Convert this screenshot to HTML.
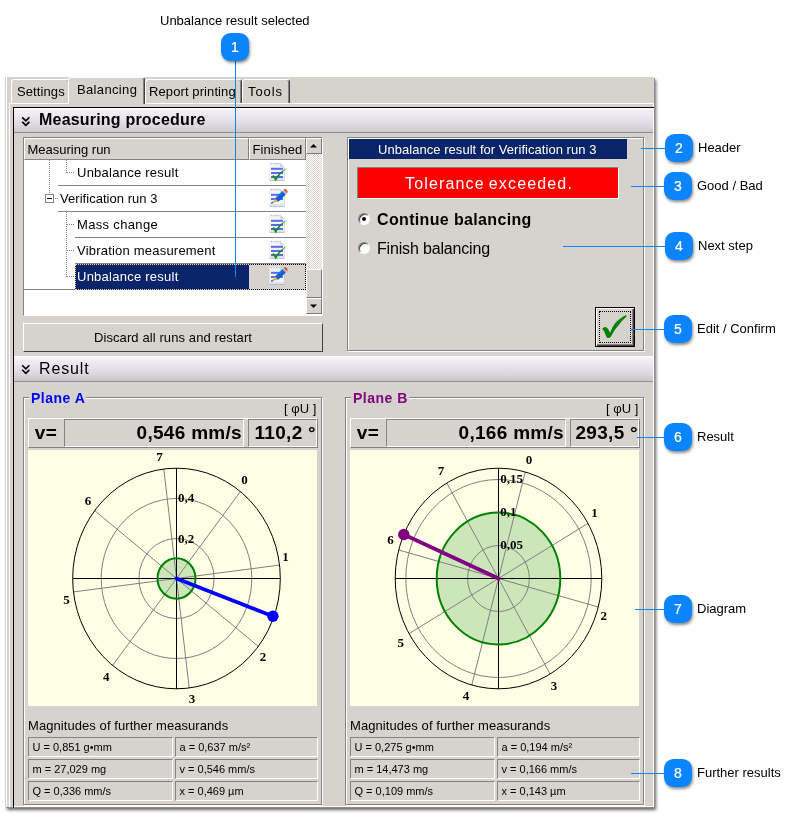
<!DOCTYPE html>
<html><head><meta charset="utf-8"><title>Unbalance result</title>
<style>
html,body{margin:0;padding:0;background:#fff;}
body{width:797px;height:817px;position:relative;overflow:hidden;font-family:"Liberation Sans",Arial,sans-serif;font-size:13px;color:#000;}
div,svg{position:absolute;box-sizing:border-box;}
.win{left:5px;top:77px;width:649px;height:730px;background:#d6d3ce;box-shadow:1px 1px 0 #8c8c8c,2px 3px 3px rgba(0,0,0,.6);}
.tab{top:79px;height:24px;border:1px solid #fff;border-right:1px solid #424142;border-bottom:none;border-radius:3px 3px 0 0;background:#d6d3ce;line-height:23.5px;padding-left:5px;white-space:nowrap;box-shadow:inset -1px 0 0 #848284;}
.tab.sel{top:77px;height:27px;line-height:23px;z-index:2;}
.hdr{left:14px;width:639px;height:25px;background:linear-gradient(#fff 0%,#f4eff6 10%,#e9e4ec 40%,#dbd7df 72%,#c9c6cd 100%);font-size:16px;line-height:24px;white-space:nowrap;}
.hdr span{position:absolute;left:25px;top:0;}
.chev{left:7px;top:8px;}
.sunk{border:1px solid;border-color:#848284 #fff #fff #848284;}
.grp{border:1px solid #848284;box-shadow:1px 1px 0 #fff, inset 1px 1px 0 #fff;}
.btn{border:1px solid;border-color:#fff #424142 #424142 #fff;background:#d6d3ce;text-align:center;}
.hd{border-color:#fff #848284 #848284 #fff;}
.sb{border-color:#fff #7b797b #7b797b #fff;}
.ico{overflow:visible;}
.row{left:25px;width:281px;height:26px;line-height:25px;white-space:nowrap;letter-spacing:.12px;}
.rl{height:1px;background:#848284;}
.dot{border:0;}
.badge{width:28px;height:28px;border-radius:9.5px;background:#0a84ff;color:#fff;font-weight:normal;font-size:14px;line-height:28px;text-align:center;box-shadow:1px 2px 3px rgba(0,0,0,.45);}
.badge span{display:inline-block;-webkit-text-stroke:.2px #fff;}
.cl{background:#0a84ff;}
.lab{font-size:13px;line-height:15px;white-space:nowrap;}
.dia{background:#ffffe6;}
.dl{font-family:"Liberation Serif","Times New Roman",serif;font-weight:bold;font-size:13px;fill:#000;}
.val{letter-spacing:.3px;font-weight:bold;font-size:19px;line-height:25px;white-space:nowrap;border:1px solid;border-color:#848284 #fff #fff #848284;}
.vp{border:1px solid;border-color:#fff #848284 #848284 #fff;}
.vl{letter-spacing:.3px;font-weight:bold;font-size:19px;line-height:26px;white-space:nowrap;}
.fb{border:1px solid;border-color:#848284 #fff #fff #848284;font-size:11px;line-height:17px;padding-left:3.5px;white-space:nowrap;padding-top:1px;}
#root{left:0;top:0;width:797px;height:817px;will-change:transform;}
</style></head><body><div id="root">

<!-- top annotation -->
<div class="lab" style="left:160px;top:13px">Unbalance result selected</div>
<div class="win"></div>
<!-- window edge highlights -->
<div style="left:6px;top:77px;width:1px;height:730px;background:#fff"></div>
<div style="left:653px;top:104px;width:1px;height:703px;background:#fff"></div>
<div style="left:9px;top:103px;width:1px;height:704px;background:#fff"></div>
<div style="left:9px;top:103px;width:645px;height:1px;background:#fff"></div>
<div style="left:13px;top:806px;width:641px;height:1px;background:#fff"></div>

<!-- tabs -->
<div class="tab" style="left:11px;width:59px;letter-spacing:.1px">Settings</div>
<div class="tab sel" style="left:68px;width:77px;padding-left:8px;letter-spacing:.35px">Balancing</div>
<div class="tab" style="left:145px;width:97px;padding-left:3px;letter-spacing:.1px">Report printing</div>
<div class="tab" style="left:242px;width:48px;padding-left:5px;letter-spacing:.9px">Tools</div>

<!-- panel black border -->
<div style="left:13px;top:107px;width:641px;height:1px;background:#000"></div>
<div style="left:13px;top:107px;width:1px;height:701px;background:#000"></div>

<!-- header 1 -->
<div class="hdr" style="top:108px;font-weight:bold"><svg class="chev" width="10" height="11" viewBox="0 0 10 11"><path d="M1.2 1.3l3.6 3.6 3.6-3.6M1.2 5.8l3.6 3.6 3.6-3.6" fill="none" stroke="#000" stroke-width="1.7"/></svg><span style="letter-spacing:.2px">Measuring procedure</span></div>
<div style="left:14px;top:132px;width:639px;height:1px;background:#8e8c92"></div>

<!-- list -->
<div style="left:23px;top:137px;width:300px;height:179px;background:#fff;border:1px solid;border-color:#848284 #fff #fff #848284"></div>
<div class="btn hd" style="left:24px;top:138px;width:225px;height:22px;line-height:22px;text-align:left;padding-left:2.5px">Measuring run</div>
<div class="btn hd" style="left:249px;top:138px;width:57px;height:22px;line-height:22px;text-align:left;padding-left:2.5px;letter-spacing:.1px">Finished</div>
<!-- scrollbar -->
<div style="left:306px;top:138px;width:16px;height:176px;background:#eae8e4;background-image:repeating-conic-gradient(#fff 0 25%,#d6d3ce 0 50%);background-size:2px 2px"></div>
<div class="btn sb" style="left:306px;top:138px;width:16px;height:16px"><svg style="left:3px;top:4px" width="8" height="5"><path d="M0 4.5L3.5 1 7 4.5z" fill="#000"/></svg></div>
<div class="btn sb" style="left:306px;top:269px;width:16px;height:29px"></div>
<div class="btn sb" style="left:306px;top:298px;width:16px;height:16px"><svg style="left:3px;top:5px" width="8" height="5"><path d="M0 0.5L3.5 4 7 0.5z" fill="#000"/></svg></div>

<!-- rows -->
<div class="row" style="top:160px"><span style="position:absolute;left:52px;letter-spacing:.25px">Unbalance result</span></div>
<div class="rl" style="left:58px;top:185px;width:248px"></div>
<div class="row" style="top:186px"><span style="position:absolute;left:35px;letter-spacing:.04px">Verification run 3</span></div>
<div class="rl" style="left:58px;top:211px;width:248px"></div>
<div class="row" style="top:212px"><span style="position:absolute;left:52px;letter-spacing:.34px">Mass change</span></div>
<div class="rl" style="left:75px;top:237px;width:231px"></div>
<div class="row" style="top:238px"><span style="position:absolute;left:52px;letter-spacing:.21px">Vibration measurement</span></div>
<div class="rl" style="left:75px;top:263px;width:231px"></div>
<div style="left:75px;top:264px;width:174px;height:26px;background:#0a246a;color:#fff;line-height:24px;padding-left:1px;letter-spacing:.25px;border:1px dotted #e8d890;border-right:none;white-space:nowrap">Unbalance result</div>
<div style="left:249px;top:264px;width:57px;height:26px;background:#d6d3ce;border:1px dotted #000;border-left:none"></div>
<div class="rl" style="left:24px;top:289px;width:51px;"></div>
<!-- tree lines -->
<div style="left:49px;top:160px;width:0;height:35px;border-left:1px dotted #848284"></div>
<div style="left:66px;top:160px;width:0;height:13px;border-left:1px dotted #848284"></div>
<div style="left:66px;top:172px;width:8px;height:0;border-top:1px dotted #848284"></div>
<div style="left:45px;top:194px;width:9px;height:9px;border:1px solid #848284;background:#fff"></div>
<div style="left:47px;top:198px;width:5px;height:1px;background:#000"></div>
<div style="left:55px;top:198px;width:3px;height:0;border-top:1px dotted #848284"></div>
<div style="left:66px;top:212px;width:0;height:65px;border-left:1px dotted #848284"></div>
<div style="left:66px;top:224px;width:8px;height:0;border-top:1px dotted #848284"></div>
<div style="left:66px;top:250px;width:8px;height:0;border-top:1px dotted #848284"></div>
<div style="left:66px;top:276px;width:8px;height:0;border-top:1px dotted #848284"></div>
<svg class="ico" style="left:270px;top:162px" width="18" height="20" viewBox="0 0 18 20"><path d="M-0.2 1.4h10.4l4.4 4.2v13.4h-14.8z" fill="#a9a9b0" opacity=".75"/>
<path d="M-0.5 0.6h10.6l4.1 4.1v13.4h-14.7z" fill="#f3f4fc"/>
<path d="M10.1 0.6l4.1 4.1h-4.1z" fill="#cfd1dc"/>
<path d="M-0.5 15.9h14.7v2.2h-14.7z" fill="#dbe4fb"/>
<path d="M0.8 1.6h1.2M3.2 1.6h1.4M5.8 1.6h1.4M8.2 1.6h1.2" stroke="#b4b6c4" stroke-width="1.2"/>
<rect x="1" y="5.8" width="12" height="2" fill="#596ee2"/><rect x="1" y="10" width="12" height="2" fill="#596ee2"/><rect x="1" y="14" width="12" height="2" fill="#596ee2"/>
<path d="M2 14.3 L3.7 13 C4.5 13.9 5.1 14.9 5.7 16.1 C8.2 11.8 12 8 17 5.9 C12.2 9.6 8.4 14.2 5.7 19.6 C4.8 17.4 3.5 15.6 2 14.3z" fill="#1f8a1c"/>
</svg>
<svg class="ico" style="left:270px;top:188px" width="18" height="20" viewBox="0 0 18 20"><defs><linearGradient id="pg188" x1="0" y1="0" x2="1" y2="1"><stop offset="0" stop-color="#3aa0f4"/><stop offset=".5" stop-color="#0c62d8"/><stop offset="1" stop-color="#0a3ea8"/></linearGradient></defs><path d="M-0.2 1.4h10.4l4.4 4.2v13.4h-14.8z" fill="#a9a9b0" opacity=".75"/>
<path d="M-0.5 0.6h10.6l4.1 4.1v13.4h-14.7z" fill="#f3f4fc"/>
<path d="M10.1 0.6l4.1 4.1h-4.1z" fill="#cfd1dc"/>
<path d="M-0.5 15.9h14.7v2.2h-14.7z" fill="#dbe4fb"/>
<path d="M0.8 1.6h1.2M3.2 1.6h1.4M5.8 1.6h1.4M8.2 1.6h1.2" stroke="#b4b6c4" stroke-width="1.2"/>
<rect x="1" y="5.8" width="12" height="2" fill="#596ee2"/><rect x="1" y="10" width="12" height="2" fill="#596ee2"/><rect x="1" y="14.1" width="1.8" height="1.6" fill="#596ee2"/>
<path d="M4.8 10.6 L12.4 3 L15.8 6.4 L8.2 13.8z" fill="url(#pg188)"/>
<path d="M12.4 3 L13.6 1.8 L17 5.2 L15.8 6.4z" fill="#b8bcc4"/>
<path d="M13.6 1.8 L14.4 1 C15.6 0.4 18 2.6 17.6 4 L17 5.2z" fill="#e0552c"/>
<path d="M4.8 10.6 L8.2 13.8 L3.8 14.6z" fill="#f2a23a"/>
<path d="M3.8 14.6 L2 14.8 L3.2 12.9z" fill="#6a4a30"/>
</svg>
<svg class="ico" style="left:270px;top:214px" width="18" height="20" viewBox="0 0 18 20"><path d="M-0.2 1.4h10.4l4.4 4.2v13.4h-14.8z" fill="#a9a9b0" opacity=".75"/>
<path d="M-0.5 0.6h10.6l4.1 4.1v13.4h-14.7z" fill="#f3f4fc"/>
<path d="M10.1 0.6l4.1 4.1h-4.1z" fill="#cfd1dc"/>
<path d="M-0.5 15.9h14.7v2.2h-14.7z" fill="#dbe4fb"/>
<path d="M0.8 1.6h1.2M3.2 1.6h1.4M5.8 1.6h1.4M8.2 1.6h1.2" stroke="#b4b6c4" stroke-width="1.2"/>
<rect x="1" y="5.8" width="12" height="2" fill="#596ee2"/><rect x="1" y="10" width="12" height="2" fill="#596ee2"/><rect x="1" y="14" width="12" height="2" fill="#596ee2"/>
<path d="M2 14.3 L3.7 13 C4.5 13.9 5.1 14.9 5.7 16.1 C8.2 11.8 12 8 17 5.9 C12.2 9.6 8.4 14.2 5.7 19.6 C4.8 17.4 3.5 15.6 2 14.3z" fill="#1f8a1c"/>
</svg>
<svg class="ico" style="left:270px;top:240px" width="18" height="20" viewBox="0 0 18 20"><path d="M-0.2 1.4h10.4l4.4 4.2v13.4h-14.8z" fill="#a9a9b0" opacity=".75"/>
<path d="M-0.5 0.6h10.6l4.1 4.1v13.4h-14.7z" fill="#f3f4fc"/>
<path d="M10.1 0.6l4.1 4.1h-4.1z" fill="#cfd1dc"/>
<path d="M-0.5 15.9h14.7v2.2h-14.7z" fill="#dbe4fb"/>
<path d="M0.8 1.6h1.2M3.2 1.6h1.4M5.8 1.6h1.4M8.2 1.6h1.2" stroke="#b4b6c4" stroke-width="1.2"/>
<rect x="1" y="5.8" width="12" height="2" fill="#596ee2"/><rect x="1" y="10" width="12" height="2" fill="#596ee2"/><rect x="1" y="14" width="12" height="2" fill="#596ee2"/>
<path d="M2 14.3 L3.7 13 C4.5 13.9 5.1 14.9 5.7 16.1 C8.2 11.8 12 8 17 5.9 C12.2 9.6 8.4 14.2 5.7 19.6 C4.8 17.4 3.5 15.6 2 14.3z" fill="#1f8a1c"/>
</svg>
<svg class="ico" style="left:270px;top:266px" width="18" height="20" viewBox="0 0 18 20"><defs><linearGradient id="pg266" x1="0" y1="0" x2="1" y2="1"><stop offset="0" stop-color="#3aa0f4"/><stop offset=".5" stop-color="#0c62d8"/><stop offset="1" stop-color="#0a3ea8"/></linearGradient></defs><path d="M-0.2 1.4h10.4l4.4 4.2v13.4h-14.8z" fill="#a9a9b0" opacity=".75"/>
<path d="M-0.5 0.6h10.6l4.1 4.1v13.4h-14.7z" fill="#f3f4fc"/>
<path d="M10.1 0.6l4.1 4.1h-4.1z" fill="#cfd1dc"/>
<path d="M-0.5 15.9h14.7v2.2h-14.7z" fill="#dbe4fb"/>
<path d="M0.8 1.6h1.2M3.2 1.6h1.4M5.8 1.6h1.4M8.2 1.6h1.2" stroke="#b4b6c4" stroke-width="1.2"/>
<rect x="1" y="5.8" width="12" height="2" fill="#596ee2"/><rect x="1" y="10" width="12" height="2" fill="#596ee2"/><rect x="1" y="14.1" width="1.8" height="1.6" fill="#596ee2"/>
<path d="M4.8 10.6 L12.4 3 L15.8 6.4 L8.2 13.8z" fill="url(#pg266)"/>
<path d="M12.4 3 L13.6 1.8 L17 5.2 L15.8 6.4z" fill="#b8bcc4"/>
<path d="M13.6 1.8 L14.4 1 C15.6 0.4 18 2.6 17.6 4 L17 5.2z" fill="#e0552c"/>
<path d="M4.8 10.6 L8.2 13.8 L3.8 14.6z" fill="#f2a23a"/>
<path d="M3.8 14.6 L2 14.8 L3.2 12.9z" fill="#6a4a30"/>
</svg>

<div class="btn" style="left:23px;top:323px;width:300px;height:29px;line-height:27px;letter-spacing:.1px">Discard all runs and restart</div>

<!-- right group -->
<div class="grp" style="left:347px;top:137px;width:297px;height:214px;border-color:#848284"></div>
<div style="left:349px;top:139px;width:278px;height:20px;background:#0a246a;color:#fff;text-align:center;line-height:22px;white-space:nowrap;letter-spacing:.04px;padding-right:1.5px">Unbalance result for Verification run 3</div>
<div class="sunk" style="left:357px;top:167px;width:262px;height:32px;background:#f00;color:#fff;font-size:16px;text-align:center;line-height:31px;letter-spacing:1.15px;word-spacing:-1.5px;white-space:nowrap;text-align:left;padding-left:47px">Tolerance exceeded.</div>
<!-- radios -->
<div style="left:358px;top:213px;width:12px;height:12px;border-radius:50%;background:#fff;border:1px solid;border-color:#848284 #fff #fff #848284;box-shadow:inset 1px 1px 0 #424142"></div>
<div style="left:362px;top:217px;width:4px;height:4px;border-radius:50%;background:#000"></div>
<div style="left:377px;top:210px;font-size:16px;font-weight:bold;line-height:20px;white-space:nowrap;letter-spacing:.35px">Continue balancing</div>
<div style="left:358px;top:242px;width:12px;height:12px;border-radius:50%;background:#fff;border:1px solid;border-color:#848284 #fff #fff #848284;box-shadow:inset 1px 1px 0 #424142"></div>
<div style="left:377px;top:239px;font-size:16px;line-height:20px;white-space:nowrap;letter-spacing:-.17px">Finish balancing</div>
<!-- check button -->
<div style="left:595px;top:307px;width:40px;height:40px;border:1px solid #000;background:#d6d3ce;box-shadow:inset 1px 1px 0 #fff,inset -1px -1px 0 #424142,inset -2px -2px 0 #848284"></div>
<div style="left:599px;top:311px;width:32px;height:32px;border:1px dotted #000"></div>
<svg style="left:600px;top:313px" width="30" height="28" viewBox="600 313 30 28"><path d="M602.2 329.3 C603 328 604 327.2 604.7 327.1 C605.6 327 606.4 327.2 606.9 327.7 C608.2 329 609.3 330.8 610.1 332.7 C611.5 329.5 613 326 615.1 323.3 C617 320.8 619 319.2 621.4 317.7 C623 316.6 624.6 315.6 626.1 314.9 L626.4 316.7 C624 318.5 622 320.8 620.1 323.3 C618.3 325.5 616.6 327.5 615.1 329.6 C613.7 331.7 612.4 333.8 611.3 335.9 C610.5 337.2 609.3 338 608.2 338.1 L606.9 337.8 C606.3 336.3 605.7 334.8 605.1 333.4 C604.6 332.2 604.1 331.2 603.5 330.2 C603.1 329.7 602.6 329.4 602.2 329.3 Z" fill="#008000"/></svg>

<!-- header 2 -->
<div class="hdr" style="top:356px;height:25px;line-height:26px"><svg class="chev" width="10" height="11" viewBox="0 0 10 11"><path d="M1.2 1.3l3.6 3.6 3.6-3.6M1.2 5.8l3.6 3.6 3.6-3.6" fill="none" stroke="#000" stroke-width="1.5"/></svg><span style="letter-spacing:.85px">Result</span></div>
<div style="left:14px;top:381px;width:639px;height:1px;background:#8e8c92"></div>

<!-- Plane A -->
<div class="grp" style="left:23px;top:397px;width:299px;height:408px"></div>
<div style="left:29px;top:389.5px;letter-spacing:.5px;background:#d6d3ce;color:#0000ff;font-weight:bold;padding:0 1px 0 2px;line-height:16px;font-size:14px;white-space:nowrap">Plane A</div>
<div style="left:284px;top:401px;line-height:16px;white-space:nowrap;font-size:13px">[ φU ]</div>
<div class="vp" style="left:28px;top:418px;width:290px;height:30px"></div><div class="vl" style="left:34.8px;top:420px">v=</div>
<div class="val" style="left:64px;top:419px;width:180px;height:28px;text-align:right;padding-right:1px">0,546 mm/s</div>
<div class="val" style="left:248px;top:419px;width:69px;height:28px;text-align:right;padding-right:0px">110,2 °</div>
<svg class="dia" style="left:28px;top:450px" width="289" height="256" viewBox="28 450 289 256">
<ellipse cx="176.5" cy="578.5" rx="19.0" ry="20.2" fill="#cce6ba" stroke="none"/>
<ellipse cx="176.5" cy="578.5" rx="37.6" ry="40.0" fill="none" stroke="#808080" stroke-width="1"/>
<ellipse cx="176.5" cy="578.5" rx="75.3" ry="80.0" fill="none" stroke="#808080" stroke-width="1"/>
<line x1="176.5" y1="578.5" x2="240.4" y2="491.6" stroke="#808080" stroke-width="1"/>
<line x1="176.5" y1="578.5" x2="279.5" y2="565.1" stroke="#808080" stroke-width="1"/>
<line x1="176.5" y1="578.5" x2="258.3" y2="646.4" stroke="#808080" stroke-width="1"/>
<line x1="176.5" y1="578.5" x2="189.2" y2="688.0" stroke="#808080" stroke-width="1"/>
<line x1="176.5" y1="578.5" x2="112.6" y2="665.4" stroke="#808080" stroke-width="1"/>
<line x1="176.5" y1="578.5" x2="73.5" y2="591.9" stroke="#808080" stroke-width="1"/>
<line x1="176.5" y1="578.5" x2="94.7" y2="510.6" stroke="#808080" stroke-width="1"/>
<line x1="176.5" y1="578.5" x2="163.8" y2="469.0" stroke="#808080" stroke-width="1"/>
<line x1="72.7" y1="578.5" x2="280.3" y2="578.5" stroke="#000" stroke-width="1" shape-rendering="crispEdges"/>
<line x1="176.5" y1="468.2" x2="176.5" y2="688.8" stroke="#000" stroke-width="1" shape-rendering="crispEdges"/>
<ellipse cx="176.5" cy="578.5" rx="103.8" ry="110.3" fill="none" stroke="#000" stroke-width="1"/>
<ellipse cx="176.5" cy="578.5" rx="19.0" ry="20.2" fill="none" stroke="#008000" stroke-width="2"/>
<line x1="176.5" y1="578.5" x2="272.9" y2="616.2" stroke="#0000ff" stroke-width="3.7" stroke-linecap="round"/>
<circle cx="272.9" cy="616.2" r="5.7" fill="#0000ff"/>
<text x="159.6" y="461.2" text-anchor="middle" class="dl">7</text>
<text x="244.6" y="484.4" text-anchor="middle" class="dl">0</text>
<text x="285.4" y="560.8" text-anchor="middle" class="dl">1</text>
<text x="263.1" y="661.1" text-anchor="middle" class="dl">2</text>
<text x="192.1" y="703.1" text-anchor="middle" class="dl">3</text>
<text x="106.2" y="680.8" text-anchor="middle" class="dl">4</text>
<text x="66.4" y="603.8" text-anchor="middle" class="dl">5</text>
<text x="88" y="504.5" text-anchor="middle" class="dl">6</text>
<text x="178" y="501.9" class="dl">0,4</text>
<text x="178" y="543.3" class="dl">0,2</text>
</svg>
<div style="left:28px;top:718px;line-height:16px;white-space:nowrap;font-size:13px;letter-spacing:.07px">Magnitudes of further measurands</div>
<div class="fb" style="left:28px;top:737px;width:145px;height:20px">U = 0,851 g•mm</div><div class="fb" style="left:175px;top:737px;width:143px;height:20px">a = 0,637 m/s²</div>
<div class="fb" style="left:28px;top:759px;width:145px;height:20px">m = 27,029 mg</div><div class="fb" style="left:175px;top:759px;width:143px;height:20px">v = 0,546 mm/s</div>
<div class="fb" style="left:28px;top:781px;width:145px;height:20px">Q = 0,336 mm/s</div><div class="fb" style="left:175px;top:781px;width:143px;height:20px">x = 0,469 µm</div>

<!-- Plane B -->
<div class="grp" style="left:345px;top:397px;width:299px;height:408px"></div>
<div style="left:351px;top:389.5px;letter-spacing:.5px;background:#d6d3ce;color:#800080;font-weight:bold;padding:0 1px 0 2px;line-height:16px;font-size:14px;white-space:nowrap">Plane B</div>
<div style="left:606px;top:401px;line-height:16px;white-space:nowrap;font-size:13px">[ φU ]</div>
<div class="vp" style="left:350px;top:418px;width:290px;height:30px"></div><div class="vl" style="left:356.8px;top:420px">v=</div>
<div class="val" style="left:386px;top:419px;width:180px;height:28px;text-align:right;padding-right:1px">0,166 mm/s</div>
<div class="val" style="left:570px;top:419px;width:69px;height:28px;text-align:right;padding-right:0px">293,5 °</div>
<svg class="dia" style="left:350px;top:450px" width="289" height="256" viewBox="350 450 289 256">
<ellipse cx="498.5" cy="578.5" rx="61.8" ry="66.0" fill="#cce6ba" stroke="none"/>
<ellipse cx="498.5" cy="578.5" rx="30.9" ry="33.0" fill="none" stroke="#808080" stroke-width="1"/>
<ellipse cx="498.5" cy="578.5" rx="92.7" ry="99.0" fill="none" stroke="#808080" stroke-width="1"/>
<line x1="498.5" y1="578.5" x2="525.2" y2="472.0" stroke="#808080" stroke-width="1"/>
<line x1="498.5" y1="578.5" x2="588.0" y2="523.4" stroke="#808080" stroke-width="1"/>
<line x1="498.5" y1="578.5" x2="598.3" y2="607.0" stroke="#808080" stroke-width="1"/>
<line x1="498.5" y1="578.5" x2="550.1" y2="674.0" stroke="#808080" stroke-width="1"/>
<line x1="498.5" y1="578.5" x2="471.8" y2="685.0" stroke="#808080" stroke-width="1"/>
<line x1="498.5" y1="578.5" x2="409.0" y2="633.7" stroke="#808080" stroke-width="1"/>
<line x1="498.5" y1="578.5" x2="398.7" y2="550.0" stroke="#808080" stroke-width="1"/>
<line x1="498.5" y1="578.5" x2="446.8" y2="483.0" stroke="#808080" stroke-width="1"/>
<line x1="395.2" y1="578.5" x2="601.8" y2="578.5" stroke="#000" stroke-width="1" shape-rendering="crispEdges"/>
<line x1="498.5" y1="468.2" x2="498.5" y2="688.8" stroke="#000" stroke-width="1" shape-rendering="crispEdges"/>
<ellipse cx="498.5" cy="578.5" rx="103.3" ry="110.3" fill="none" stroke="#000" stroke-width="1"/>
<ellipse cx="498.5" cy="578.5" rx="61.8" ry="66.0" fill="none" stroke="#008000" stroke-width="2"/>
<line x1="498.5" y1="578.5" x2="403.8" y2="534.5" stroke="#800080" stroke-width="3.7" stroke-linecap="round"/>
<circle cx="403.8" cy="534.5" r="5.7" fill="#800080"/>
<text x="529" y="463.7" text-anchor="middle" class="dl">0</text>
<text x="441" y="474.8" text-anchor="middle" class="dl">7</text>
<text x="594.5" y="517.1" text-anchor="middle" class="dl">1</text>
<text x="603.8" y="619.9" text-anchor="middle" class="dl">2</text>
<text x="554.1" y="689.7" text-anchor="middle" class="dl">3</text>
<text x="465.9" y="700.2" text-anchor="middle" class="dl">4</text>
<text x="400.7" y="646.8" text-anchor="middle" class="dl">5</text>
<text x="390.5" y="544.2" text-anchor="middle" class="dl">6</text>
<text x="500.3" y="482.5" class="dl">0,15</text>
<text x="500.3" y="515.7" class="dl">0,1</text>
<text x="500.3" y="548.7" class="dl">0,05</text>
</svg>
<div style="left:350px;top:718px;line-height:16px;white-space:nowrap;font-size:13px;letter-spacing:.07px">Magnitudes of further measurands</div>
<div class="fb" style="left:350px;top:737px;width:145px;height:20px">U = 0,275 g•mm</div><div class="fb" style="left:497px;top:737px;width:143px;height:20px">a = 0,194 m/s²</div>
<div class="fb" style="left:350px;top:759px;width:145px;height:20px">m = 14,473 mg</div><div class="fb" style="left:497px;top:759px;width:143px;height:20px">v = 0,166 mm/s</div>
<div class="fb" style="left:350px;top:781px;width:145px;height:20px">Q = 0,109 mm/s</div><div class="fb" style="left:497px;top:781px;width:143px;height:20px">x = 0,143 µm</div>

<!-- callouts -->
<div class="cl" style="left:235px;top:60px;width:1px;height:217px"></div>
<div class="badge" style="left:221px;top:33px"><span>1</span></div>
<div class="cl" style="left:641px;top:148px;width:24px;height:1px"></div><div class="badge" style="left:665px;top:134px"><span>2</span></div><div class="lab" style="left:698px;top:140px">Header</div>
<div class="cl" style="left:631px;top:186px;width:34px;height:1px"></div><div class="badge" style="left:664px;top:172px"><span>3</span></div><div class="lab" style="left:697px;top:178px">Good / Bad</div>
<div class="cl" style="left:563px;top:246px;width:102px;height:1px"></div><div class="badge" style="left:665px;top:232px"><span>4</span></div><div class="lab" style="left:698px;top:238px">Next step</div>
<div class="cl" style="left:631px;top:329px;width:34px;height:1px"></div><div class="badge" style="left:664px;top:315px"><span>5</span></div><div class="lab" style="left:697px;top:321px">Edit / Confirm</div>
<div class="cl" style="left:637px;top:437px;width:28px;height:1px"></div><div class="badge" style="left:664px;top:423px"><span>6</span></div><div class="lab" style="left:697px;top:429px">Result</div>
<div class="cl" style="left:635px;top:609px;width:30px;height:1px"></div><div class="badge" style="left:664px;top:595px"><span>7</span></div><div class="lab" style="left:697px;top:601px">Diagram</div>
<div class="cl" style="left:631px;top:773px;width:34px;height:1px"></div><div class="badge" style="left:664px;top:759px"><span>8</span></div><div class="lab" style="left:697px;top:765px">Further results</div>
</div></body></html>
